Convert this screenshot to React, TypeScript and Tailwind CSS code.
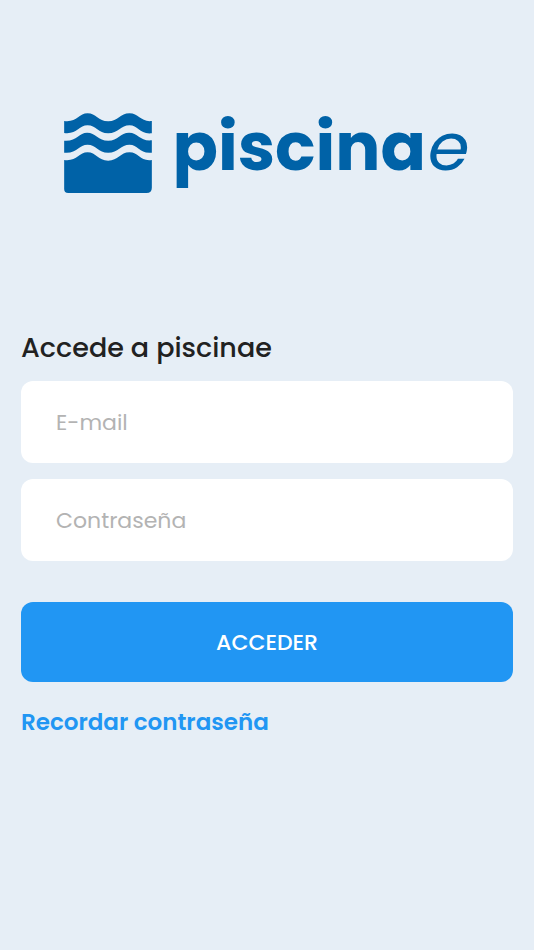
import React from "react";

function WavesMark() {
  return (
    <svg viewBox="40 38 263 240" className="h-20 w-[88px] shrink-0" fill="#0062a7" aria-hidden="true">
      <path d="M40 62C78 67 84 39 110 39S142 63 172 63S208 39 236 39S270 66 303 62V99C266 103 262 75 236 75S202 99 172 99S136 75 110 75S78 103 40 98Z" />
      <path d="M40 121C78 124 84 97 109 97S142 121 172 121S208 97 235 97S268 124 303 120V157C266 161 262 133 236 133S202 157 172 157S136 133 110 133S78 161 40 157Z" />
      <path d="M40 179C78 184 84 156 110 156S142 181 172 181S208 156 236 156S268 184 303 179V262Q303 278 287 278H52Q40 278 40 266Z" />
    </svg>
  );
}

export default function App() {
  const [email, setEmail] = React.useState("");
  const [password, setPassword] = React.useState("");
  const field =
    "block h-[82px] w-full rounded-xl bg-white px-[35px] text-[22px] text-[#212121] outline-none placeholder:text-[#b3b3b3]";

  return (
    <main className="min-h-screen bg-[#e6eef6] px-[21px] pt-[113px] font-['Poppins','Inter',sans-serif] text-[#212121]">
      <div className="flex h-20 items-start justify-center gap-5" role="img" aria-label="piscinae">
        <WavesMark />
        <span className="text-[67px] leading-[68px] font-bold text-[#0062a7]">
          piscina<span className="ml-0.5 font-normal italic">e</span>
        </span>
      </div>
      <form className="mt-[135px]" onSubmit={(e) => e.preventDefault()}>
        <h1 className="text-[27px] leading-10 font-medium">Accede a piscinae</h1>
        <div className="mt-[13px] flex flex-col gap-4">
          <input type="email" aria-label="E-mail" placeholder="E-mail" className={field} value={email} onChange={(e) => setEmail(e.target.value)} />
          <input type="password" aria-label="Contraseña" placeholder="Contraseña" className={field} value={password} onChange={(e) => setPassword(e.target.value)} />
        </div>
        <button type="submit" className="mt-[41px] h-20 w-full rounded-xl bg-[#2196f3] text-[22px] font-medium text-white">
          ACCEDER
        </button>
        <a href="#recordar" className="mt-6 inline-block text-[23px] leading-8 font-semibold text-[#2196f3]">
          Recordar contraseña
        </a>
      </form>
    </main>
  );
}
